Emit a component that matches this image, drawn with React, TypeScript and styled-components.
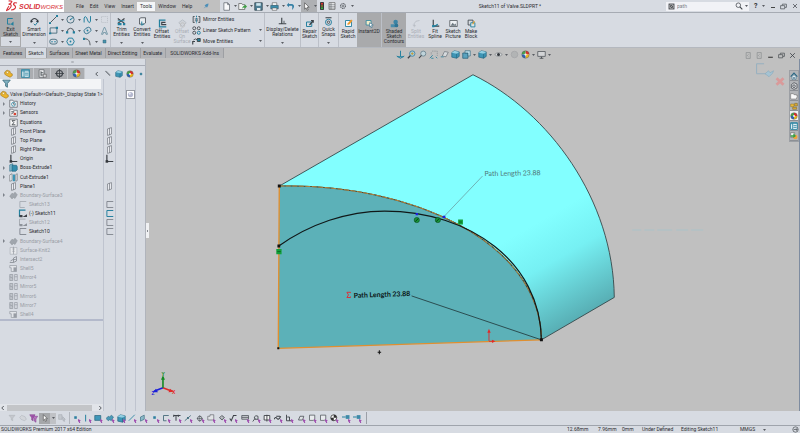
import React from "react";
import styled, { createGlobalStyle } from "styled-components";

const C = {
  light: "#d7dbe2",
  grey: "#c0c0c0",
  mid: "#a9aaac",
  line: "#a6abb3",
  ink: "#2c2c30",
  faded: "#9a9ea6",
  teal: "#23809e",
};

const GlobalStyle = createGlobalStyle`
  * { box-sizing: border-box; }
  body { margin: 0; background: ${C.light}; font-family: Roboto, "Liberation Sans", sans-serif; font-size: 5px; line-height: 5px; color: ${C.ink}; }
  button, input { font: inherit; color: inherit; border: 0; padding: 0; margin: 0; background: none; }
  ul { list-style: none; margin: 0; padding: 0; }
`;

/* ---------- icons, drawn on a 12 x 12 grid ---------- */

const T = { fill: "none", stroke: C.teal, strokeWidth: 1.3 };
const D = { fill: "none", stroke: "#3c4147", strokeWidth: 1.1 };
const G = { fill: "none", stroke: "#989da4", strokeWidth: 1 };

const Ball = (
  <>
    <circle cx="6" cy="6" r="5" fill="#fff" />
    <path d="M6 6V1A5 5 0 0 1 11 6Z" fill="#d8302c" />
    <path d="M6 6H1A5 5 0 0 1 6 1Z" fill="#48a04a" />
    <path d="M6 6H11A5 5 0 0 1 6 11Z" fill="#e9b61f" />
    <path d="M6 6V11A5 5 0 0 1 1 6Z" fill="#2c62b4" />
    <circle cx="6" cy="6" r="1.5" fill="#f4f4f4" />
    <circle cx="6" cy="6" r="5" fill="none" stroke="#555" strokeWidth=".6" />
  </>
);
const Part = (
  <>
    <path d="M1 4L4 1.5L8 3L8.5 5.5L11 6.5V9L8 11L4 9L1 7Z" fill="#edb52b" stroke="#a2761a" strokeWidth=".8" />
    <circle cx="4.6" cy="4.6" r="1.5" fill="#fff3c7" stroke="#a2761a" strokeWidth=".6" />
  </>
);
const Cube = (
  <>
    <path d="M1 3.5L4.5 1L11 2.5V8.5L7.5 11L1 9.5Z" fill="#3e95b5" stroke="#1f5e78" strokeWidth=".8" />
    <path d="M1 3.5L7.5 5L11 2.5L4.5 1Z" fill="#93cfe2" />
    <path d="M7.5 5V11" stroke="#1f5e78" strokeWidth=".8" />
  </>
);
const Sheet = <path d="M2.5 1H7.5L10 3.5V11H2.5Z M7.5 1V3.5H10" fill="#f8f9fb" stroke="#555b63" strokeWidth=".9" />;
const Cursor = <path d="M3.5 1L9.5 7H6.8L8.2 10.3L6.8 11L5.4 7.8L3.5 9.6Z" fill="#fff" stroke="#3a3a3a" strokeWidth=".8" />;
const Lens = <><circle cx="7" cy="4.8" r="3.4" {...D} /><path d="M4.6 7.3L1.2 11" {...D} strokeWidth="1.6" /></>;

const ICONS: Record<string, React.ReactNode> = {
  pin: <path d="M11 1L7 2L3 5L5.4 6.6L1 11L6.5 7.6L8 9.5L10.4 5Z" fill="#4d8fb8" />,
  doc: Sheet,
  open: <><path d="M1 2H5L6 3.5H9V10H1Z" fill="#f4f6f4" stroke="#555" strokeWidth=".9" /><path d="M5.5 9Q6 5 9 5V3L12 6L9 9V7.3Q7 7 5.5 9Z" fill="#3da045" /></>,
  save: <><path d="M1 1H11V11H1Z" fill="#4f7f95" stroke="#34444d" /><path d="M3 1.5H9V5H3Z" fill="#cfe6ee" /><path d="M4 8H8.5V11H4Z" fill="#e8ecee" /></>,
  print: <><path d="M3 1H9V5H3Z" fill="#fff" stroke="#555" strokeWidth=".8" /><path d="M1 4.5H11V9H1Z" fill="#3b8fae" stroke="#31586a" strokeWidth=".8" /><path d="M3 8H9V11H3Z" fill="#fff" stroke="#555" strokeWidth=".8" /></>,
  undo: <path d="M4 1L1 4L4 7V5H7.5Q9 5.2 8 10.5Q11.6 7 10.4 4.2Q9.4 2.8 7 2.8H4Z" fill="#347fa5" />,
  cursor: Cursor,
  traffic: <><rect x="3" y="0" width="6" height="12" rx="1" fill="#35393c" /><circle cx="6" cy="2.5" r="1.5" fill="#e33" /><circle cx="6" cy="6" r="1.4" fill="#927b21" /><circle cx="6" cy="9.5" r="1.5" fill="#3cba46" /></>,
  list: <><path d="M1.5 1H10.5V11H1.5Z" fill="#f5f7f9" stroke="#555" /><path d="M4.5 1V11M1.5 4H10.5M1.5 6.5H10.5M1.5 9H10.5" {...D} strokeWidth=".7" /></>,
  gear: <><circle cx="6" cy="6" r="3.8" {...D} strokeDasharray="2 .8" strokeWidth="1.4" /><circle cx="6" cy="6" r="1.6" {...D} strokeWidth=".9" /></>,
  search: Lens,
  lens: <><circle cx="5" cy="4.8" r="3.4" {...D} /><path d="M7.4 7.3L11 11" {...D} strokeWidth="1.6" /></>,
  prompt: <><rect x="1" y="1" width="10" height="10" fill="#3d4145" /><path d="M3 3H9V9H3ZM4 8L8 4" fill="none" stroke="#fff" strokeWidth=".9" /></>,
  min: <path d="M2 9H10" stroke="#333" strokeWidth="1.8" />,
  restore: <path d="M1 4.5H8V10H1ZM4 4V2H11V7.5H8.5" {...D} />,
  close: <path d="M2 2L10 10M10 2L2 10" {...D} strokeWidth="1.4" />,
  exit: <><path d="M9 2H2V9.5H6" {...T} /><path d="M10 6L6 9.5L10 11.5" fill={C.teal} /></>,
  smart: <><path d="M1 6.5Q3 2 6 2T11 6.5" {...D} strokeWidth="1.6" /><path d="M1 3.5V8L4 6Z M11 3.5V8L8 6Z" fill="#2d3740" /><path d="M5 9L7 11L10 7" {...T} /></>,
  line: <><path d="M1.5 10.5L10.5 1.5" {...D} /><path d="M0 9.5H2.6V12H0ZM9.4 0H12V2.6H9.4Z" fill={C.teal} /></>,
  circle: <><circle cx="6" cy="6" r="4.8" {...D} stroke="#3a6172" /><path d="M6 6L10 3" {...T} /><circle cx="6" cy="6" r="1" fill={C.teal} /></>,
  spline: <><path d="M1.5 10V4Q3 0 5 4L7 9Q9 12 10 8V1.5" {...T} /></>,
  rect: <><path d="M1.5 2.5H10.5V9.5H1.5Z" {...D} stroke="#3a6172" /><path d="M0 8.5H3V11H0ZM9 1H12V4H9Z" fill={C.teal} /></>,
  arc: <><path d="M1.5 8Q2 3 6 3T10.5 8" {...D} /><path d="M0 7H3V10H0ZM9 7H12V10H9Z" fill={C.teal} /></>,
  ellipse: <><ellipse cx="6" cy="6" rx="5" ry="3.6" transform="rotate(-35 6 6)" {...D} stroke="#2c6f8c" /><circle cx="6" cy="6" r="1.3" fill={C.teal} /></>,
  slot: <><rect x="1" y="3" width="10" height="6.4" rx="3" {...D} stroke="#3a6172" /><circle cx="4" cy="6.2" r="1" fill={C.teal} /><circle cx="8" cy="6.2" r="1" fill={C.teal} /></>,
  hex: <><path d="M3.4 1.5H8.6L11 6L8.6 10.5H3.4L1 6Z" {...T} /><circle cx="6" cy="6" r="1.2" fill={C.teal} /></>,
  fillet: <><path d="M1 2.5H4Q9 3 9.5 11" {...D} /><path d="M0 1H2.6V4H0Z" fill={C.teal} /></>,
  frame: <path d="M2 2H10V10H2Z" {...G} stroke="#b7bcc3" strokeDasharray="1.5 1" />,
  textA: <path d="M2 11L5.5 2H6.5L10 11H8L7.3 8.6H4.7L4 11Z" fill="none" stroke="#5e8798" strokeWidth="1" />,
  dot: <path d="M4 4H8V8H4Z" fill="#4a93ac" stroke="#2d657a" strokeWidth=".6" />,
  trim: <><path d="M1 2L10 8.5M10 2L1 8.5" {...D} strokeWidth="1.6" /><path d="M1 8H6V11H1ZM8 8H11V11H8Z" fill={C.teal} /><path d="M1 5H10" stroke="#2f8fb0" strokeWidth="1.3" /></>,
  convert: <><path d="M2 2L4 1H10V8L8 9.5H2Z" fill="#e8ecf0" stroke="#3c4147" strokeWidth="1" /><path d="M5 6V11L8 9" {...T} /></>,
  offset: <><path d="M10 1.5H2V10.5H11" {...T} strokeWidth="1.7" /><path d="M10 4.5H5V7.5H11" {...D} strokeWidth="1.5" /></>,
  offsurf: <><path d="M6 1L11 5L6 10L1 5Z" fill="#cfd3d9" stroke="#b4b9c0" /><circle cx="6" cy="8" r="3" {...G} stroke="#bbb" /></>,
  mirror: <><path d="M3.5 2H1.5V10H3.5M8.5 2H10.5V10H8.5" {...D} /><path d="M3.5 5H5V8H3.5M8.5 5H7V8H8.5" {...D} strokeWidth=".7" /><path d="M6 1V11" {...T} strokeDasharray="2 1" /></>,
  pattern: <><circle cx="3" cy="3" r="2" {...D} /><circle cx="9" cy="3" r="2" {...D} /><circle cx="3" cy="9" r="2" {...D} /><circle cx="9" cy="9" r="2" {...T} /></>,
  move: <><path d="M1 10V6H4" {...D} strokeWidth="1.5" /><path d="M2 4Q5 1 7 4" {...D} /><path d="M7 2H11V6H7Z" fill={C.teal} stroke="#333" /></>,
  relations: <><path d="M5 1V9M1 9H11" {...D} strokeWidth="1.5" /><path d="M8 5V8" {...D} /></>,
  repair: <><path d="M2 4H9V10H2Z" {...T} /><path d="M6 8L11 2M8 2H11V5" {...D} strokeWidth="1.6" /></>,
  snaps: <><path d="M2 1H10" {...D} strokeWidth="1.4" /><circle cx="6" cy="7" r="4" {...T} /><circle cx="6" cy="7" r="1.6" {...D} /></>,
  rapid: <><path d="M2 2H10V10H2Z" fill="#f6f8fa" stroke={C.teal} strokeWidth="1.2" /><path d="M4.5 8L5 5.5L9.5 .5L11.5 2.3L7 7.3Z" fill="#f09a2b" /></>,
  instant: <><path d="M1.5 2H8V8H1.5Z" fill="#f2ecc8" stroke={C.teal} /><path d="M6 5L11 8L8.8 8.6L9.5 11L8 11.3L7.2 9.3L6 10Z" fill="#fff" stroke="#2c6a88" strokeWidth=".8" /></>,
  shaded: <><circle cx="7.5" cy="4" r="3" fill="#3c84a5" /><path d="M1 7H7V11H1Z" fill="#4a8cab" /><circle cx="8.5" cy="8.5" r="2.5" fill="#2f7495" /></>,
  split: <path d="M3 11V6Q4 2 10 2M1 8L5 9" {...G} stroke="#b4b9c0" />,
  fill: <><path d="M3 1V9.5H11" {...D} strokeWidth="1.5" /><path d="M3 9Q5 10.5 9 7" {...T} strokeWidth="1.8" /><path d="M1.5 8H4.5V11H1.5Z" fill={C.teal} /></>,
  picture: <><path d="M1 2H11V10H1Z" fill="#eef1f4" stroke="#4c5157" /><path d="M2 9L5 5L7 7.5L8.5 6L10 9Z" fill="#69747c" /></>,
  block: <><path d="M1.5 1.5H8V8H1.5Z" {...D} /><path d="M5 5H10.5V10.5H5Z" fill="#dfe6ea" stroke={C.teal} strokeWidth="1.2" /><path d="M10 3L7.5 7" stroke="#e2a02b" strokeWidth="1.5" /></>,
  orient: <><path d="M6 1V9M2 9H10" {...T} /><path d="M1 8L6 11L11 8" {...T} /></>,
  zoomfit: <><circle cx="7" cy="4.8" r="3.6" fill="#a9cedd" stroke="#31779a" /><path d="M7 3V6.6M5.2 4.8H8.8" stroke="#c79a31" strokeWidth="1.2" /><path d="M4.4 7.5L1.2 11" {...D} strokeWidth="1.8" /></>,
  zoomarea: <><circle cx="7" cy="4.8" r="3.4" fill="#bfd3da" stroke="#5d7885" /><path d="M4.6 7.3L1.2 11" {...D} strokeWidth="1.4" /></>,
  zoomprev: <><path d="M4 1.5H11V8M3 3V7" {...G} stroke="#8b9095" strokeDasharray="2 1" /><path d="M1 11L5 7M3 11H6M9 9L11 11" {...T} strokeWidth="1.1" /></>,
  section: <><path d="M3 8L6 2L11 3L8 9Z" fill="#d5dadd" stroke="#70777e" /><path d="M1 8H5V10H1Z" fill="#6d99a9" /></>,
  box: Cube,
  displaybox: <><path d="M1 4H8V11H1Z" fill="#5ba3bf" stroke="#28617b" /><path d="M4 1H11V8H8V4H4Z" fill="#bcdde9" stroke="#28617b" strokeWidth=".8" /></>,
  eye: <><path d="M1 6Q6 1 11 6Q6 11 1 6Z" fill="#d9dcde" stroke="#70757b" strokeWidth=".8" /><circle cx="6" cy="6" r="2" fill="#30343a" /></>,
  ghost: <circle cx="6" cy="6" r="4.4" fill="#b2b4b5" stroke="#a4a6a8" />,
  ball: Ball,
  monitor: <><path d="M1 2H11V8.5H1Z" fill="#d2d4d6" stroke="#4c5157" strokeWidth="1" /><path d="M6 9V11M3.5 11H8.5" {...D} /></>,
  paneL: <path d="M2 1V11H9V1ZM6 4L4 6L6 8" {...G} stroke="#808386" />,
  part: Part,
  props: <><path d="M1 1H11V11H1Z" fill="#fff" stroke={C.teal} strokeWidth="1.4" /><path d="M1 2.5H11M4 2V11M5 5.5H10M5 8H10" stroke={C.teal} strokeWidth="1.3" /></>,
  config: <><path d="M1.5 1H8V11H1.5Z" fill="#f0f1f3" stroke="#5c6167" /><path d="M4 3V9M4 5H7M4 8H7" {...D} /><path d="M7 7H11V11H7Z" fill="#d8dadd" stroke="#555" strokeWidth=".8" /></>,
  target: <><circle cx="6" cy="6" r="4" {...D} strokeWidth="1.4" /><path d="M6 0V12M0 6H12" {...D} /></>,
  left: <path d="M7.5 2L3.5 6L7.5 10" {...D} strokeWidth="1.7" />,
  right: <path d="M4.5 2L8.5 6L4.5 10" {...D} strokeWidth="1.7" />,
  hide: <path d="M2 2L10 10M3.5 1.5L11 9" {...D} strokeWidth=".9" />,
  funnel: <path d="M1 1.5H11L7.2 6V11L4.8 9.5V6Z" fill="#7fb0c0" stroke="#2f6072" strokeWidth="1" />,
  history: <><path d="M1 1.5H5L6 3H11V11H1Z" fill="#f2f4f6" stroke="#50555c" strokeWidth=".9" /><circle cx="6" cy="7" r="2.6" {...T} strokeWidth="1" /><path d="M6 5V7H8" {...D} strokeWidth=".8" /></>,
  sensors: <><path d="M1 1.5H5L6 3H11V11H1Z" fill="#f2f4f6" stroke="#50555c" strokeWidth=".9" /><path d="M3 5H7M3 8L6 6" {...D} /><circle cx="7.8" cy="8" r="1.8" fill="#d64333" /></>,
  sigma: <><path d="M1 1.5H11V11H1Z" fill="#f6f7f8" stroke="#50555c" strokeWidth=".9" /><path d="M8.5 3.5H4L6.5 6.3L4 9H8.5" {...D} /></>,
  plane: <path d="M3.4 2.6L8.6 .8V9.4L3.4 11.2ZM6 1.6V10.4" fill="#eef0f4" stroke="#6b7078" strokeWidth=".9" />,
  origin: <><path d="M2.5 1V10H11" {...D} strokeWidth="1.6" /><path d="M.8 8.2H4.2V11.6H.8Z" fill="#33373c" /></>,
  extrude: <><path d="M1 2.5L5 1V10L1 11Z" fill="#80bcd1" stroke="#286a85" strokeWidth=".8" /><path d="M4 3H10L11 5V9L9 11H4Z" fill="#348dad" stroke="#1f5e78" strokeWidth=".8" /></>,
  cut: <><path d="M1 2.5L4 1V10L1 11Z" fill="#f0f2f4" stroke="#63686f" strokeWidth=".8" /><path d="M5 2H8V11H5Z" fill="#3d95b6" /><path d="M9 2L11 1V10L9 11Z" fill="#e9ecef" stroke="#63686f" strokeWidth=".8" /></>,
  surface: <path d="M1 7L4 3L6 4L8 1.5L11 5L8 10L6 8.5L4 10.5Z" fill="#a0a6ad" stroke="#8d939a" strokeWidth=".7" />,
  clearGrey: <path d="M1 5L4 2L9 4L11 8L8 10L3 8Z" fill="#d2d5da" stroke="#b0b4bb" strokeWidth=".8" />,
  sketch: <path d="M11 2H2.5V10H11" {...G} stroke="#777c84" strokeWidth="1.1" />,
  sketchGrey: <path d="M11 2H2.5V10H9" {...G} stroke="#a3a8af" strokeWidth="1.1" />,
  sketchBlue: <path d="M11 2H2.5V10H11" {...T} />,
  sketchOn: <><path d="M10 1.5H2V9.5H5" {...T} strokeWidth="1.6" /><path d="M2 8H6V11H2ZM6 10.5L12 7V10.5Z" fill="#3c4147" /></>,
  sketchShared: <><path d="M10 1.5H2V9.5H5" {...G} /><path d="M2 8H6V11H2ZM6 10.5L12 7V10.5Z" fill="#8e939a" /></>,
  knit: <><path d="M1.5 2H10.5V11H1.5Z" fill="#e6e8eb" stroke="#a5aab1" strokeWidth=".8" /><path d="M6 1V11M4.5 4H7.5M4.5 7H7.5" {...G} /></>,
  intersect: <path d="M1 10H6V4L10 2V8L6 10M2 8Q5 5 9 6" {...G} stroke="#8c9198" strokeWidth="1.2" />,
  shell: <><path d="M1 2H10V10H3V5H1Z" fill="#e1e4e8" stroke="#9298a0" strokeWidth=".9" /><path d="M6 4.5H10V10H6Z" fill="#979ca4" /></>,
  mirrorF: <><path d="M1 2H5V10H1Z" fill="#bfc4ca" stroke="#8b9098" strokeWidth=".8" /><path d="M7.5 2H11V10H7.5ZM1 5L5 7M7.5 5H11" {...G} stroke="#8b9098" strokeWidth=".8" /></>,
  sphere: <><path d="M.5 .5H11.5V11.5H.5Z" fill="#fff" stroke="#6a6f78" strokeWidth="1" /><circle cx="6" cy="6" r="3.5" fill="#b4b8cf" /><circle cx="5" cy="4.8" r="1.4" fill="#eceef6" /></>,
  home: <><path d="M1 7L6 1.5L11 7" {...T} stroke="#2b6885" strokeWidth="1.7" /><path d="M3 7V11H5V8H7V11H9V7L6 4Z" fill="#e9f1f5" stroke="#2b6885" strokeWidth=".8" /></>,
  library: <><path d="M2 4L6 1L10.5 3V9L6 11L2 9Z" fill="#d9dbdd" stroke="#44494f" strokeWidth="1.1" /><circle cx="6" cy="6.3" r="2" {...D} /></>,
  folder: <path d="M1 2.5H5L6 4H9.5V5H11.5L9.5 10.5H1Z" fill="#fafafa" stroke="#666" strokeWidth=".8" />,
  palette: <><path d="M1 3H6V7H1Z" fill="#e9bb3c" stroke="#8a6c1d" strokeWidth=".7" /><path d="M7 2H11V6H7ZM4 8H10V11H4Z" fill="#dbac35" stroke="#6f5a22" strokeWidth=".7" /></>,
  forum: <><path d="M1 1H7V8H1Z" fill="#f5f5f5" stroke="#555" strokeWidth=".8" /><circle cx="8" cy="7.5" r="3.3" fill="#f2a33b" /><path d="M1 5H5V2L9 6L5 9V7H1Z" fill="#34a044" /></>,
  help: <><circle cx="6" cy="6" r="4.6" {...D} /><path d="M3 6H9M7 4L9 6L7 8" {...D} /></>,
  funnels: <><path d="M1 1H8L5.5 5V9L3.6 8V5Z" fill="#a65bb0" stroke="#7b3788" strokeWidth=".7" /><path d="M5 3H11.5L9.3 6.5V11L7.2 9.5V6.5Z" fill="#b974c2" stroke="#7b3788" strokeWidth=".7" /></>,
  funnelGrey: <path d="M1.5 2H10.5L7 6V10L5 9V6Z" fill="#c5c8ce" stroke="#adb1b8" strokeWidth=".8" />,
  cursorGrey: <path d="M1 1H6V8H1ZM7 4L11 8H9L10 11L8 10.5L7 8Z" fill="#c4c8ce" stroke="#a2a7ae" strokeWidth=".8" />,
  fVertex: <path d="M3 3H6.4V6.4H3Z" fill="#2d7fa0" />,
  fEdge: <path d="M3.5 1V10" {...T} />,
  fFace: <path d="M1 2H9V8.5H1Z" fill="#3e97b9" stroke="#245f78" strokeWidth=".9" />,
  fSurf: <path d="M0 6L3 3L5 4L7 1.5L10 4L7 9L5 7.5L3 9Z" fill="#4c9ab7" stroke="#24627c" strokeWidth=".7" />,
  fAxis: <path d="M1 9L9 1" {...T} strokeWidth="1.1" />,
  fPlane: <path d="M2 4L7 1.5V7L2 9.5Z" fill="#8bb9ca" stroke="#3d6d80" strokeWidth=".9" />,
  fSketch: <path d="M9 2H2V9H6" {...D} stroke="#3a6172" />,
  fDim: <path d="M1 1V4M1 2H10M4 2V9M7 1V4" {...D} strokeWidth="1.3" />,
  fMid: <><path d="M1 9L9 2" {...D} stroke="#3a6172" /><path d="M4 4H6.5V6.5H4Z" fill="#46717f" /></>,
  fCentre: <><circle cx="5" cy="6" r="3" {...D} strokeWidth=".9" /><path d="M5 1.5V10.5M1 6H9" {...D} strokeWidth=".7" /></>,
  fNote: <path d="M1 3H4V1H9V8H1Z" fill="#e1e3e6" stroke="#62676d" strokeWidth=".9" />,
  fGtol: <><path d="M2 5L5 2L8.5 4.5L5.5 8Z" fill="#b7bbc0" stroke="#3e4348" /></>,
  fSurfFin: <path d="M1 6L3 9L6 2H10" {...D} strokeWidth="1.4" />,
  fBlock: <path d="M1 2H10V7H1ZM1 4.5H10" fill="#c9ccd0" stroke="#4a4f55" />,
  fWeld: <path d="M1 10L4 6M3 4Q5 1 8 3V7H4Z" {...D} />,
  fDatum: <path d="M1.5 2H9V8H1.5ZM5.2 1V10" fill="#f5f5f5" stroke="#3e4348" strokeWidth="1.2" />,
  fWave: <path d="M0 7Q2 3 4 6T9 3M3 3H8" {...D} strokeWidth="1.4" />,
  fSteps: <path d="M2 1V9H9M3 4H6V9" {...D} strokeWidth="1.2" />,
  fTag: <path d="M2 8L4 3H9L7.5 8Z" fill="#dfe2e6" stroke="#41464c" />,
  fBox: <path d="M2 1.5H9V7L7 8.5H2Z" fill="#e9ebee" stroke="#50555b" />,
  fChecker: <><circle cx="5" cy="5" r="4" fill="#f5f5f5" stroke="#333" /><path d="M5 5V1A4 4 0 0 1 9 5ZM5 5V9A4 4 0 0 1 1 5Z" fill="#2f2f2f" /></>,
  fConn: <><path d="M0 4H5" {...T} /><path d="M5 1.5H10V6.5H5Z" fill="#3e8aa8" /></>,
};

const Glyph = styled.svg<{ $size?: number }>`
  display: block;
  flex: none;
  width: ${(p) => p.$size ?? 9}px;
  height: ${(p) => p.$size ?? 9}px;
`;
const Icon = ({ name, size, picker }: { name: string; size?: number; picker?: boolean }) => (
  <Glyph viewBox="0 0 12 12" $size={size} aria-hidden="true">
    {ICONS[name]}
    {picker && <path d="M8 6.5L12 8.5L10.4 9.2L11 12H9.4L9 9.8L8 10.5Z" fill="#a04fb0" />}
  </Glyph>
);

const CaretSvg = styled.svg`
  display: block;
  flex: none;
  width: 3px;
  height: 2px;
`;
const Caret = () => (
  <CaretSvg viewBox="0 0 6 4" aria-hidden="true"><path d="M0 0H6L3 4Z" fill="#5a5d63" /></CaretSvg>
);

/* ---------- page frame ---------- */

const Page = styled.div`
  display: flex;
  flex-direction: column;
  min-height: 100vh;
  white-space: nowrap;
  overflow: hidden;
`;

const TitleBar = styled.header`
  display: flex;
  height: 13px;
  border-bottom: 1px solid ${C.line};
`;
const Brand = styled.div`
  display: flex;
  align-items: center;
  flex: none;
  width: 64px;
  padding-left: 6px;
  gap: 1px;
  background: #fff;
  color: #d9333a;
  font: italic 6px "Liberation Sans", sans-serif;
  b { font-size: 7px; }
`;
const BrandMark = styled.svg`
  width: 12px;
  height: 12px;
  flex: none;
`;
const MenuBar = styled.nav`
  display: flex;
  align-items: center;
  width: 156px;
  padding-left: 9px;
  background: ${C.grey};
`;
const MenuButton = styled.button<{ $open?: boolean }>`
  height: 9px;
  padding: 0 3px;
  background: ${(p) => (p.$open ? "#f4f5f7" : "none")};
`;
const PinButton = styled.button`
  margin-left: 8px;
`;
const QuickBar = styled.div`
  display: flex;
  align-items: center;
  padding-left: 1px;
`;
const QuickGroup = styled.div<{ $active?: boolean }>`
  display: flex;
  align-items: center;
  align-self: stretch;
  gap: 3px;
  width: 16px;
  padding-left: 1px;
  background: ${(p) => (p.$active ? "#aeb0b3" : "none")};
`;
const QuickButton = styled.button`
  width: 10px;
`;
const DocTitle = styled.h1`
  flex: 1;
  margin: 0;
  text-align: center;
  font-size: 5px;
  line-height: 13px;
  font-weight: 400;
`;
const SearchBox = styled.label`
  display: flex;
  align-items: center;
  align-self: center;
  gap: 2px;
  width: 83px;
  height: 9px;
  padding: 0 1px 0 2px;
  background: #f1f2f6;
`;
const SearchInput = styled.input`
  flex: 1;
  min-width: 0;
  color: #7b7f86;
  outline: 0;
`;
const WindowTools = styled.div`
  display: flex;
  align-items: center;
  justify-content: space-between;
  width: 51px;
  padding: 0 2px 0 5px;
`;
const HelpButton = styled.button`
  font-size: 7px;
  font-weight: 700;
`;

/* ---------- ribbon ---------- */

const Ribbon = styled.div`
  display: flex;
  height: 35px;
  border-bottom: 1px solid #b4b8bf;
`;
const Command = styled.button<{ $w: number; $top?: number; $on?: boolean; $off?: boolean; $sep?: boolean }>`
  display: flex;
  flex-direction: column;
  align-items: center;
  flex: none;
  width: ${(p) => p.$w}px;
  padding-top: ${(p) => p.$top ?? 4}px;
  border-right: ${(p) => (p.$sep ? "1px solid #bcc0c8" : "0")};
  background: ${(p) => (p.$on ? C.mid : "none")};
  color: ${(p) => (p.$off ? "#a9adb5" : C.ink)};
`;
const CommandText = styled.span`
  margin-top: 1px;
  text-align: center;
  white-space: pre-line;
`;
const CommandDrop = styled.span<{ $split?: boolean }>`
  display: flex;
  align-items: center;
  justify-content: center;
  align-self: stretch;
  height: 9px;
  margin: ${(p) => (p.$split ? "auto 1px 1px" : "auto 0 0")};
  background: ${(p) => (p.$split ? C.light : "none")};
`;
const ToolGrid = styled.div`
  display: grid;
  grid-template-columns: 17px 17px 17px 10px;
  align-content: center;
  row-gap: 2px;
  width: 63px;
  padding: 1px 0 0 1px;
  border-right: 1px solid #bcc0c8;
`;
const GridTool = styled.button`
  display: flex;
  align-items: center;
  gap: 3px;
`;
const EntityList = styled.div`
  display: flex;
  flex-direction: column;
  justify-content: center;
  gap: 2px;
  width: 73px;
  border-right: 1px solid #bcc0c8;
`;
const EntityRow = styled.button`
  display: flex;
  align-items: center;
  gap: 2px;
  padding: 0 2px 0 0;
  text-align: left;
  span { flex: 1; }
`;

/* ---------- command tabs and view toolbar ---------- */

const TabRow = styled.div`
  display: flex;
  justify-content: space-between;
  height: 11px;
  background: ${C.grey};
`;
const Tabs = styled.div`
  display: flex;
  flex: none;
`;
const Tab = styled.button<{ $on?: boolean }>`
  height: 10px;
  padding: 0 3px 0 2px;
  border-right: 1px solid #9d9fa3;
  background: ${(p) => (p.$on ? C.light : "#b4b5b8")};
  &:first-child { padding-left: 3px; }
  &:last-child { padding: 0 4px; }
`;
const ViewBar = styled.div`
  display: flex;
  align-items: flex-end;
  gap: 2px;
`;
const ViewButton = styled.button`
  display: flex;
  align-items: center;
  gap: 2px;
`;
const PaneTools = styled.div`
  display: flex;
  align-items: flex-end;
  gap: 4px;
  padding: 0 4px 0 22px;
`;

/* ---------- feature tree ---------- */

const Body = styled.div`
  display: flex;
  flex: 1;
`;
const SidePanel = styled.aside`
  display: flex;
  flex-direction: column;
  flex: none;
  width: 146px;
  border-right: 1px solid #b0b4bc;
`;
const Grip = styled.div`
  display: flex;
  align-items: center;
  justify-content: center;
  height: 7px;
  border-bottom: 1px solid #a8acb5;
  &::after { content: ""; width: 3px; height: 2px; border-radius: 1px; background: #b3b7be; }
`;
const PanelTabs = styled.div`
  display: flex;
  height: 13px;
  padding-top: 2px;
`;
const PanelTab = styled.button<{ $on?: boolean }>`
  display: flex;
  align-items: center;
  justify-content: center;
  width: 17px;
  border-right: 1px solid ${(p) => (p.$on ? "transparent" : "#c5c8cd")};
  background: ${(p) => (p.$on ? C.light : "#abadb1")};
`;
const PanelTools = styled.div`
  display: flex;
  flex: 1;
  align-items: center;
  justify-content: space-between;
  padding: 0 1px 0 9px;
`;
const Columns = styled.div`
  display: flex;
  flex: 1;
`;
const TreeColumn = styled.div`
  display: flex;
  flex-direction: column;
  width: 103px;
`;
const FilterBox = styled.label`
  display: flex;
  height: 10px;
  margin: 0 2px 1px 0;
  padding-left: 2px;
  background: #f3f4f6;
`;
const FilterInput = styled.input`
  flex: 1;
  min-width: 0;
  outline: 0;
`;
const Rows = styled.ul`
  display: grid;
  grid-template-rows: repeat(25, 1fr);
  height: 229px;
`;
const TreeRow = styled.li<{ $depth: number; $off?: boolean; $root?: boolean }>`
  display: flex;
  align-items: center;
  gap: ${(p) => (p.$root ? 1 : 2)}px;
  padding-left: ${(p) => p.$depth * 9}px;
  color: ${(p) => (p.$off ? C.faded : C.ink)};
`;
const Expander = styled.button<{ $shown?: boolean }>`
  width: 7px;
  visibility: ${(p) => (p.$shown ? "visible" : "hidden")};
`;
const ExpanderMark = styled.svg`
  display: block;
  width: 2px;
  height: 4px;
  margin-left: 3px;
`;
const RollbackBar = styled.div`
  height: 2px;
  background: #b3b9cb;
`;
const ScrollRow = styled.div`
  display: flex;
  align-items: center;
  height: 7px;
  margin-top: auto;
  gap: 1px;
  background: #e1e4e9;
`;
const ScrollThumb = styled.div`
  flex: 1;
  height: 6px;
  margin-right: 4px;
  background: #c3c5c8;
`;
const StateColumn = styled.div<{ $w: number }>`
  width: ${(p) => p.$w}px;
  padding-top: 11px;
  border-left: 1px solid #bfc4cf;
`;
const StateCell = styled.li`
  display: flex;
  align-items: center;
  justify-content: center;
`;

/* ---------- graphics area ---------- */

const Viewport = styled.main`
  position: relative;
  flex: 1;
  background: ${C.grey};
  border-right: 1px solid #7e8ca0;
`;
const Scene = styled.svg`
  position: absolute;
  inset: 0;
  width: 100%;
  height: 100%;
`;
const PanelHandle = styled.button`
  position: absolute;
  left: 0;
  top: 164px;
  display: flex;
  align-items: center;
  justify-content: center;
  width: 3px;
  height: 15px;
  background: #f0f1f3;
  &::after { content: ""; width: 1px; height: 2px; background: #888c92; }
`;
const TaskPane = styled.div`
  position: absolute;
  right: 0;
  top: 11px;
  display: flex;
  flex-direction: column;
  width: 10px;
  border: 1px solid #9c9fa4;
`;
const TaskButton = styled.button<{ $on?: boolean }>`
  display: flex;
  align-items: center;
  justify-content: center;
  height: 10px;
  border-bottom: 1px solid #8d9095;
  background: ${(p) => (p.$on ? "#eef0f3" : "#b3b5b8")};
`;

/* ---------- bottom bars ---------- */

const FilterBar = styled.div`
  display: flex;
  align-items: center;
  height: 15px;
  padding-left: 6px;
  border-bottom: 1px solid #9fa4ac;
`;
const FilterButton = styled.button<{ $on?: boolean }>`
  display: flex;
  align-items: center;
  justify-content: center;
  width: 11px;
  height: 11px;
  background: ${(p) => (p.$on ? "#a5a7aa" : "none")};
`;
const FilterDrop = styled.button`
  display: flex;
  align-items: center;
  justify-content: center;
  width: 6px;
  height: 11px;
  background: #bfc1c5;
`;
const FilterStrip = styled.div`
  display: flex;
  justify-content: space-between;
  align-items: center;
  width: 298px;
  height: 12px;
  margin-left: 2px;
  padding: 0 4px 0 2px;
  border-left: 1px solid #b2b6bd;
  border-right: 1px solid #9b9fa7;
`;
const StatusBar = styled.footer`
  display: flex;
  align-items: center;
  height: 7px;
  padding: 0 1px;
`;
const StatusName = styled.span`
  flex: 1;
`;
const StatusItem = styled.span<{ $w: number }>`
  width: ${(p) => p.$w}px;
`;

type Cmd = { label: string; icon: string; w: number; top?: number; on?: boolean; off?: boolean; sep?: boolean; drop?: boolean };

const CommandButton = ({ c }: { c: Cmd }) => (
  <Command $w={c.w} $top={c.top} $on={c.on} $off={c.off} $sep={c.sep}>
    <Icon name={c.icon} size={9} />
    <CommandText>{c.label}</CommandText>
    {c.drop && <CommandDrop $split={c.on}><Caret /></CommandDrop>}
  </Command>
);

const LEFT: Cmd[] = [
  { label: "Exit\nSketch", icon: "exit", w: 21, on: true, drop: true },
  { label: "Smart\nDimension", icon: "smart", w: 27, drop: true, sep: true },
];
const MIDDLE: Cmd[] = [
  { label: "Trim\nEntities", icon: "trim", w: 21, drop: true },
  { label: "Convert\nEntities", icon: "convert", w: 20, drop: true },
  { label: "Offset\nEntities", icon: "offset", w: 20, top: 6 },
  { label: "Offset\nOn\nSurface", icon: "offsurf", w: 20, top: 6, off: true },
];
const RIGHT: Cmd[] = [
  { label: "Display/Delete\nRelations", icon: "relations", w: 36, drop: true, sep: true },
  { label: "Repair\nSketch", icon: "repair", w: 18, top: 6, sep: true },
  { label: "Quick\nSnaps", icon: "snaps", w: 20, drop: true, sep: true },
  { label: "Rapid\nSketch", icon: "rapid", w: 18, top: 6 },
  { label: "Instant2D", icon: "instant", w: 25, top: 6, on: true, sep: true },
  { label: "Shaded\nSketch\nContours", icon: "shaded", w: 24, top: 6, on: true },
  { label: "Split\nEntities", icon: "split", w: 20, top: 6, off: true },
  { label: "Fit\nSpline", icon: "fill", w: 18, top: 6 },
  { label: "Sketch\nPicture", icon: "picture", w: 18, top: 6 },
  { label: "Make\nBlock", icon: "block", w: 18, top: 6 },
];
const GRID: [string, boolean][] = [
  ["line", true], ["circle", true], ["spline", true], ["frame", false],
  ["rect", true], ["arc", true], ["ellipse", true], ["textA", false],
  ["slot", true], ["hex", false], ["fillet", true], ["dot", false],
];
const QUICK: [string, boolean][] = [["doc", false], ["open", false], ["save", false], ["print", false], ["undo", false], ["cursor", true]];
const VIEW: [string, boolean][] = [
  ["orient", false], ["zoomfit", false], ["zoomarea", false], ["zoomprev", false], ["section", false], ["box", false],
  ["displaybox", true], ["box", true], ["eye", true], ["ghost", false], ["ball", true], ["monitor", true],
];

type Node = { label: string; icon: string; depth?: number; open?: boolean; off?: boolean; state?: string };
const TREE: Node[] = [
  { label: "History", icon: "history", open: true },
  { label: "Sensors", icon: "sensors", open: true },
  { label: "Equations", icon: "sigma" },
  { label: "Front Plane", icon: "plane", state: "plane" },
  { label: "Top Plane", icon: "plane", state: "plane" },
  { label: "Right Plane", icon: "plane", state: "plane" },
  { label: "Origin", icon: "origin", state: "origin" },
  { label: "Boss-Extrude1", icon: "extrude", open: true },
  { label: "Cut-Extrude1", icon: "cut", open: true },
  { label: "Plane1", icon: "plane", state: "plane" },
  { label: "Boundary-Surface3", icon: "surface", open: true, off: true },
  { label: "Sketch13", icon: "sketchGrey", depth: 1, off: true, state: "sketch" },
  { label: "(-) Sketch11", icon: "sketchOn", depth: 1, state: "sketchBlue" },
  { label: "Sketch12", icon: "sketchShared", depth: 1, off: true, state: "sketch" },
  { label: "Sketch10", icon: "sketch", depth: 1, state: "sketch" },
  { label: "Boundary-Surface4", icon: "surface", open: true, off: true },
  { label: "Surface-Knit2", icon: "knit", off: true },
  { label: "Intersect2", icon: "intersect", off: true },
  { label: "Shell5", icon: "shell", off: true },
  { label: "Mirror4", icon: "mirrorF", off: true },
  { label: "Mirror5", icon: "mirrorF", off: true },
  { label: "Mirror6", icon: "mirrorF", off: true },
  { label: "Mirror7", icon: "mirrorF", off: true },
  { label: "Shell4", icon: "shell", off: true },
];

const FILTERS = [
  "fVertex", "fEdge", "fFace", "fSurf", "box", "fAxis", "fPlane", "fVertex", "fSketch", "fDim", "fMid", "fCentre", "fNote",
  "fGtol", "fSurfFin", "fBlock", "fWeld", "fDatum", "fWave", "fSteps", "fTag", "fBox", "fBox", "fChecker", "fConn", "fConn",
];

const Model = () => (
  <Scene viewBox="146 59 654 352" role="img" aria-label="Valve model with path length dimensions">
    <defs>
      <linearGradient id="shell" gradientUnits="userSpaceOnUse" x1="556" y1="212" x2="608" y2="302">
        <stop offset="0" stopColor="#82ffff" />
        <stop offset=".4" stopColor="#76f0f3" />
        <stop offset="1" stopColor="#58aeb4" />
      </linearGradient>
    </defs>
    <path d="M279.5 186L473.5 74.5C550 112 614 200 615 297.5L542 340C541 241 410 183 279.5 186Z" fill="url(#shell)" stroke="#35484b" strokeWidth=".9" />
    <path d="M279.5 186C410 183 541 241 542 340L278.5 348.5Z" fill="#5cb1b8" />
    <path d="M279.5 186C410 183 541 241 542 340" fill="none" stroke="#4a4a35" strokeWidth="1.1" />
    <path d="M279.5 186C410 183 541 241 542 340" fill="none" stroke="#d2953f" strokeWidth=".8" strokeDasharray="5 1.5" />
    <path d="M279.5 186L278.5 348.5L542 340" fill="none" stroke="#e08f30" strokeWidth="1.4" />
    <path d="M279 246C310 224 348 211 385 211C470 211 541 262 542 340" fill="none" stroke="#101818" strokeWidth="1.2" />
    <path d="M412 296L542 340" stroke="#1e3436" strokeWidth=".8" />
    <path d="M444.5 216.5L483 176" stroke="#6aa0a3" strokeWidth=".8" />
    <g fill="#111">
      <path d="M278 184.5H281V187.5H278ZM277.6 244.6H280.4V247.4H277.6ZM540.5 338.5H543.5V341.5H540.5ZM277.5 347.5H279.5V349.5H277.5Z" />
      <path d="M378 352H381.5V353H378ZM379.2 350.5H380.2V354.5H379.2Z" />
    </g>
    <g fill="#2020e0"><path d="M416 213H418.4V215.2H416ZM443.2 215.8H445.8V218H443.2Z" /></g>
    <path d="M276.5 249H281.8V254.2H276.5ZM458.6 219.6H463.4V224.4H458.6Z" fill="#12a03a" />
    <path d="M277.5 251.6H281M459.5 222H462.5" stroke="#0b5c22" strokeWidth=".8" />
    <g fill="#159538" stroke="#0a4a1c" strokeWidth=".6"><circle cx="417.2" cy="220" r="2.6" /><circle cx="438.3" cy="220" r="2.6" /></g>
    <path d="M415.8 221.4L418.8 218.4M436.8 221.4L439.8 218.4" stroke="#062e10" strokeWidth=".9" />
    <path d="M489.5 341V332M489.5 341.5H494" stroke="#e02a2a" strokeWidth=".9" />
    <path d="M487.8 333L489.5 329L491.2 333ZM492.5 339.8L496 341.5L492.5 343.2Z" fill="#e02a2a" />
    <g fontFamily="Lato, Liberation Sans, sans-serif" fontSize="7">
      <text x="485" y="176" fill="#4f7779" transform="rotate(-1 485 176)">Path Length 23.88</text>
      <text x="354" y="298" fill="#0a1414" fontWeight="700" transform="rotate(-2 354 298)">Path Length 23.88</text>
    </g>
    <path d="M350.8 293.2V292.4H347.2L348.8 295L347.2 297.6H350.8V296.6" fill="none" stroke="#d8323a" strokeWidth="1" />
    <path d="M633 230H642M645 230H655M658 230H673M677 230H689M692 230H704" stroke="#a9c4cb" strokeWidth="2" opacity=".45" />
    <path d="M163 388L154 391.5" stroke="#1c20d8" strokeWidth="1.6" />
    <path d="M153 392.5L156 389L158 392.5Z" fill="#1c20d8" />
    <path d="M163 388L172 391.5" stroke="#e02a2a" strokeWidth="1.6" />
    <path d="M174 392L170 389L168.5 392.4Z" fill="#e02a2a" />
    <path d="M163 388V378" stroke="#138a22" strokeWidth="1.6" />
    <path d="M161 380L163 375.5L165 380Z" fill="#138a22" />
    <g fontFamily="Liberation Sans, sans-serif" fontSize="5" fontWeight="700">
      <text x="151.5" y="395" fill="#1c20d8">Z</text><text x="172" y="394" fill="#e02a2a">X</text><text x="161.5" y="376" fill="#138a22">Y</text>
    </g>
    <path d="M765 63.5H757.5V73.5H767" fill="none" stroke="#92aebf" strokeWidth=".9" />
    <path d="M766 73.5L769.5 70.5L771 72.5L774.5 70.5L773.5 73L770 76.5Z" fill="#a5c3d3" stroke="#86a9bc" strokeWidth=".6" />
    <path d="M777.5 78L784.5 84.5M784.5 78L777.5 84.5" stroke="#d99a9a" strokeWidth="2.8" />
  </Scene>
);

export default function App() {
  return (
    <Page>
      <GlobalStyle />
      <TitleBar>
        <Brand>
          <BrandMark viewBox="0 0 24 24" aria-hidden="true">
            <path d="M5 2Q15 1 10 6Q8 8 5 8.5M6 9Q13 8 9 15Q6 20 1 21Q3 16 6 12M22 6Q15 4 15 9Q21 13 18 17Q15 20 10 20" fill="none" stroke="#d9333a" strokeWidth="2.2" />
          </BrandMark>
          <span><b>SOLID</b>WORKS</span>
        </Brand>
        <MenuBar aria-label="Main menu">
          {["File", "Edit", "View", "Insert", "Tools", "Window", "Help"].map((m) => (
            <MenuButton key={m} $open={m === "Tools"}>{m}</MenuButton>
          ))}
          <PinButton aria-label="Pin menu"><Icon name="pin" size={6} /></PinButton>
        </MenuBar>
        <QuickBar>
          {QUICK.map(([n, active]) => (
            <QuickGroup key={n} $active={active}>
              <QuickButton aria-label={n}><Icon name={n} size={9} /></QuickButton><Caret />
            </QuickGroup>
          ))}
        </QuickBar>
        <QuickBar>
          <QuickButton aria-label="Rebuild"><Icon name="traffic" size={8} /></QuickButton>
          <QuickButton aria-label="File properties"><Icon name="list" size={8} /></QuickButton>
          <QuickGroup><QuickButton aria-label="Options"><Icon name="gear" size={8} /></QuickButton><Caret /></QuickGroup>
        </QuickBar>
        <DocTitle>Sketch11 of Valve.SLDPRT *</DocTitle>
        <SearchBox>
          <Icon name="prompt" size={7} />
          <SearchInput aria-label="Search commands" defaultValue="path" />
          <Icon name="lens" size={8} /><Caret />
        </SearchBox>
        <WindowTools>
          <HelpButton aria-label="Help">?</HelpButton><Caret />
          <button aria-label="Minimize"><Icon name="min" size={6} /></button>
          <button aria-label="Restore"><Icon name="restore" size={7} /></button>
          <button aria-label="Close"><Icon name="close" size={6} /></button>
        </WindowTools>
      </TitleBar>

      <Ribbon>
        {LEFT.map((c) => <CommandButton key={c.icon} c={c} />)}
        <ToolGrid>
          {GRID.map(([n, drop]) => (
            <GridTool key={n} aria-label={n}><Icon name={n} size={9} />{drop && <Caret />}</GridTool>
          ))}
        </ToolGrid>
        {MIDDLE.map((c) => <CommandButton key={c.icon} c={c} />)}
        <EntityList>
          <EntityRow><Icon name="mirror" size={9} /><span>Mirror Entities</span></EntityRow>
          <EntityRow><Icon name="pattern" size={9} /><span>Linear Sketch Pattern</span><Caret /></EntityRow>
          <EntityRow><Icon name="move" size={9} /><span>Move Entities</span><Caret /></EntityRow>
        </EntityList>
        {RIGHT.map((c) => <CommandButton key={c.icon} c={c} />)}
      </Ribbon>

      <TabRow>
        <Tabs>
          {["Features", "Sketch", "Surfaces", "Sheet Metal", "Direct Editing", "Evaluate", "SOLIDWORKS Add-Ins"].map((t) => (
            <Tab key={t} $on={t === "Sketch"}>{t}</Tab>
          ))}
        </Tabs>
        <ViewBar>
          {VIEW.map(([n, drop], i) => (
            <ViewButton key={i} aria-label={n}><Icon name={n} size={9} />{drop && <Caret />}</ViewButton>
          ))}
        </ViewBar>
        <PaneTools>
          {["paneL", "paneL", "min", "restore", "close"].map((n, i) => (
            <button key={i} aria-label={n}><Icon name={n} size={7} /></button>
          ))}
        </PaneTools>
      </TabRow>

      <Body>
        <SidePanel>
          <Grip />
          <PanelTabs>
            {["part", "props", "config", "target", "ball"].map((n) => (
              <PanelTab key={n} $on={n === "part"} aria-label={n}><Icon name={n} size={9} /></PanelTab>
            ))}
            <PanelTools>
              <Icon name="left" size={6} /><Icon name="hide" size={7} /><Icon name="box" size={8} /><Icon name="ball" size={8} /><Icon name="dot" size={6} />
            </PanelTools>
          </PanelTabs>
          <Columns>
            <TreeColumn>
              <FilterBox><Icon name="funnel" size={9} /><FilterInput aria-label="Filter tree" /></FilterBox>
              <Rows>
                <TreeRow $depth={0} $root><Icon name="part" size={9} />Valve (Default&lt;&lt;Default&gt;_Display State 1&gt;</TreeRow>
                {TREE.map((n) => (
                  <TreeRow key={n.label} $depth={n.depth ?? 0} $off={n.off}>
                    <Expander $shown={n.open} aria-label="Expand">
                      <ExpanderMark viewBox="0 0 4 8"><path d="M0 0L4 4L0 8Z" fill="#7d828a" /></ExpanderMark>
                    </Expander>
                    <Icon name={n.icon} size={9} />
                    {n.label}
                  </TreeRow>
                ))}
              </Rows>
              <RollbackBar />
              <ScrollRow><Icon name="left" size={6} /><ScrollThumb /><Icon name="right" size={6} /></ScrollRow>
            </TreeColumn>
            <StateColumn $w={12}>
              <Rows>
                <StateCell />
                {TREE.map((n) => <StateCell key={n.label}>{n.state && <Icon name={n.state} size={9} />}</StateCell>)}
              </Rows>
            </StateColumn>
            <StateColumn $w={10} />
            <StateColumn $w={10}>
              <Rows><StateCell><Icon name="sphere" size={9} /></StateCell></Rows>
            </StateColumn>
            <StateColumn $w={10} />
          </Columns>
        </SidePanel>
        <Viewport>
          <Model />
          <PanelHandle aria-label="Collapse panel" />
          <TaskPane>
            {["home", "library", "folder", "palette", "ball", "props", "forum"].map((n) => (
              <TaskButton key={n} $on={n === "ball"} aria-label={n}><Icon name={n} size={8} /></TaskButton>
            ))}
          </TaskPane>
        </Viewport>
      </Body>

      <FilterBar>
        <FilterButton aria-label="Toggle filters"><Icon name="funnelGrey" size={8} /></FilterButton>
        <FilterButton aria-label="Clear filters"><Icon name="clearGrey" size={8} /></FilterButton>
        <FilterButton aria-label="Filter selection"><Icon name="funnels" size={9} /></FilterButton>
        <FilterButton aria-label="Select" $on><Icon name="cursor" size={8} /></FilterButton>
        <FilterDrop aria-label="Select options"><Caret /></FilterDrop>
        <FilterButton aria-label="Select other"><Icon name="cursorGrey" size={8} /></FilterButton>
        <FilterStrip>
          {FILTERS.map((n, i) => (
            <button key={i} aria-label={`Filter ${i + 1}`}><Icon name={n} size={9} picker /></button>
          ))}
        </FilterStrip>
      </FilterBar>
      <StatusBar>
        <StatusName>SOLIDWORKS Premium 2017 x64 Edition</StatusName>
        <StatusItem $w={31}>12.68mm</StatusItem>
        <StatusItem $w={24}>7.96mm</StatusItem>
        <StatusItem $w={20}>0mm</StatusItem>
        <StatusItem $w={39}>Under Defined</StatusItem>
        <StatusItem $w={59}>Editing Sketch11</StatusItem>
        <StatusItem $w={23}>MMGS</StatusItem>
        <StatusItem $w={29}><Caret /></StatusItem>
        <Icon name="help" size={7} />
      </StatusBar>
    </Page>
  );
}
